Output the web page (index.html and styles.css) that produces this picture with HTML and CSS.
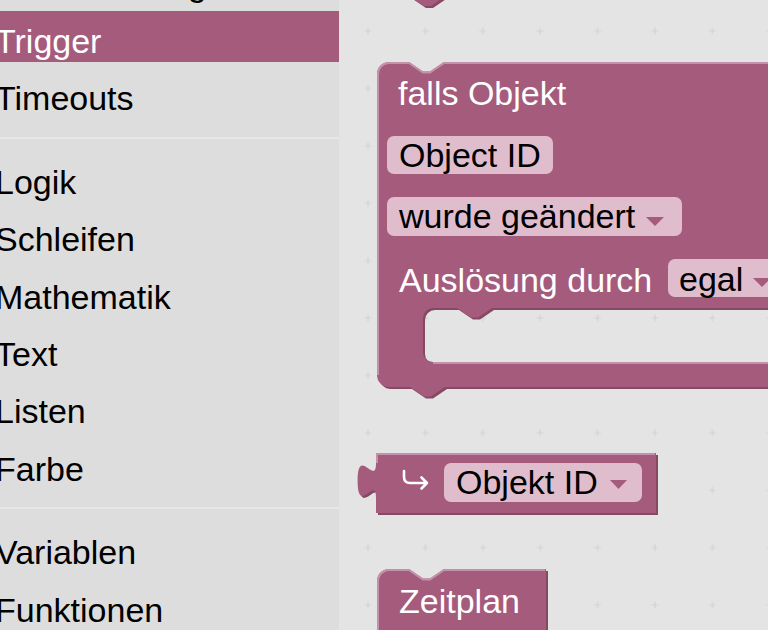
FILE: index.html
```html
<!DOCTYPE html>
<html lang="de">
<head>
<meta charset="utf-8">
<title>Blockly</title>
<link rel="stylesheet" href="styles.css">
</head>
<body>
<div class="app">
  <nav class="toolbox">
    <div class="cat-list">
      <div class="cat">Konvertierung</div>
      <div class="cat selected">Trigger</div>
      <div class="cat">Timeouts</div>
      <div class="sep"></div>
      <div class="cat">Logik</div>
      <div class="cat">Schleifen</div>
      <div class="cat">Mathematik</div>
      <div class="cat">Text</div>
      <div class="cat">Listen</div>
      <div class="cat">Farbe</div>
      <div class="sep"></div>
      <div class="cat">Variablen</div>
      <div class="cat">Funktionen</div>
    </div>
  </nav>
  <main class="workspace">
    <svg class="canvas" width="429" height="630" viewBox="339 0 429 630" xmlns="http://www.w3.org/2000/svg">
      <defs>
        <pattern id="grid" patternUnits="userSpaceOnUse" x="339.3" y="2.3" width="57.4" height="57.4">
          <path class="grid-cross" d="M25.2 28.7 H32.2 M28.7 25.2 V32.2"/>
        </pattern>
      </defs>
      <rect x="339" y="0" width="429" height="630" fill="url(#grid)"/>

      <!-- block above (only its bottom tab is visible) -->
      <g>
        <path class="blk-dark" transform="translate(2 2)" d="M377 -100 H800 V-3.5 H445 l-14 9.5 h-7 l-14 -9.5 H377 Z"/>
        <path class="blk" d="M377 -100 H800 V-3.5 H445 l-14 9.5 h-7 l-14 -9.5 H377 Z"/>
      </g>

      <!-- falls Objekt block -->
      <g>
        <path class="blk-dark" transform="translate(2 2)" d="M377 74 A12 12 0 0 1 389 62 H409 l14 9.5 h7 l14 -9.5 H800 V308 H492 l-14 9.5 h-7 l-14 -9.5 H433 A10 10 0 0 0 423 318 V352 A10 10 0 0 0 433 362 H800 V387 H445 l-14 9.5 h-7 l-14 -9.5 H389 A12 12 0 0 1 377 375 Z"/>
        <path class="blk" d="M377 74 A12 12 0 0 1 389 62 H409 l14 9.5 h7 l14 -9.5 H800 V308 H492 l-14 9.5 h-7 l-14 -9.5 H433 A10 10 0 0 0 423 318 V352 A10 10 0 0 0 433 362 H800 V387 H445 l-14 9.5 h-7 l-14 -9.5 H389 A12 12 0 0 1 377 375 Z"/>
        <path class="blk-light" d="M378 375 V74 A11 11 0 0 1 389 63 H409 l14 9.5 h7 l14 -9.5 H800 M433 363 H800"/>

        <text class="blk-label" x="398" y="105">falls Objekt</text>

        <rect class="field" x="387" y="136" width="166" height="38" rx="7"/>
        <text class="field-text" x="399" y="167">Object ID</text>

        <rect class="field" x="387" y="197" width="295" height="39" rx="7"/>
        <text class="field-text" x="399" y="228">wurde geändert</text>
        <path class="arrow" d="M646 217 H664 L655 226 Z"/>

        <text class="blk-label" x="399" y="292">Auslösung durch</text>
        <rect class="field" x="668" y="259" width="130" height="38" rx="7"/>
        <text class="field-text" x="679" y="291">egal</text>
        <path class="arrow" d="M753 278 H771 L762 287 Z"/>
      </g>

      <!-- Objekt ID value block -->
      <g>
        <path class="blk-dark" transform="translate(2 2)" d="M376 453 H656 V513 H376 V498 c0 -23 -18.4 18.4 -18.4 -17.25 s18.4 5.75 18.4 -17.25 Z"/>
        <path class="blk" d="M376 453 H656 V513 H376 V498 c0 -23 -18.4 18.4 -18.4 -17.25 s18.4 5.75 18.4 -17.25 Z"/>
        <path class="blk-light" d="M377 463 V454 H655"/>
        <path class="icon" d="M404 471 V477 Q404 483 410 483 H427 M421.5 477.5 L427 483 L421.5 488.5"/>
        <rect class="field" x="444" y="463" width="198" height="39" rx="7"/>
        <text class="field-text" x="456" y="494">Objekt ID</text>
        <path class="arrow" d="M610 480 H627 L618.5 489 Z"/>
      </g>

      <!-- Zeitplan block -->
      <g>
        <path class="blk-dark" transform="translate(2 2)" d="M377 700 V581 A12 12 0 0 1 389 569 H409 l14 9.5 h7 l14 -9.5 H546 V700 Z"/>
        <path class="blk" d="M377 700 V581 A12 12 0 0 1 389 569 H409 l14 9.5 h7 l14 -9.5 H546 V700 Z"/>
        <path class="blk-light" d="M378 700 V581 A11 11 0 0 1 389 570 H409 l14 9.5 h7 l14 -9.5 H545"/>
        <text class="blk-label" x="399" y="613">Zeitplan</text>
      </g>
    </svg>
  </main>
</div>
</body>
</html>
```

FILE: styles.css
```css
html, body {
  margin: 0;
  padding: 0;
}

body {
  font-family: "Liberation Sans", Arial, Helvetica, sans-serif;
  background: #e4e4e4;
}

.app {
  display: flex;
  width: 768px;
  height: 630px;
  overflow: hidden;
}

.toolbox {
  width: 339px;
  flex: 0 0 339px;
  background: #dddddd;
  overflow: hidden;
}

.cat-list {
  display: flex;
  flex-direction: column;
  margin-top: -46.4px;
}

.cat {
  box-sizing: border-box;
  height: 51px;
  padding-top: 10px;
  line-height: 41px;
  margin-bottom: 6.4px;
  font-size: 34px;
  color: #000;
  text-indent: -5px;
  white-space: nowrap;
}

.cat.selected {
  background: #a55b7c;
  color: #fff;
}

.sep {
  height: 2px;
  background: #e7e7e7;
  margin: 11px 0 13px;
}

.workspace {
  flex: 1 1 auto;
  background: #e4e4e4;
  overflow: hidden;
}

.canvas {
  display: block;
}

.grid-cross {
  stroke: #d3d3d3;
  stroke-width: 1.2;
  fill: none;
}

.blk {
  fill: #a55b7c;
}

.blk-dark {
  fill: #844963;
}

.blk-light {
  fill: none;
  stroke: #c392aa;
  stroke-width: 2;
}

.blk-label {
  font-family: "Liberation Sans", Arial, Helvetica, sans-serif;
  font-size: 34px;
  fill: #fff;
}

.field {
  fill: #dfbdcd;
}

.field-text {
  font-family: "Liberation Sans", Arial, Helvetica, sans-serif;
  font-size: 34px;
  fill: #000;
}

.arrow {
  fill: #a55b7c;
}

.icon {
  fill: none;
  stroke: #fff;
  stroke-width: 2.6;
  stroke-linecap: round;
  stroke-linejoin: round;
}
```
